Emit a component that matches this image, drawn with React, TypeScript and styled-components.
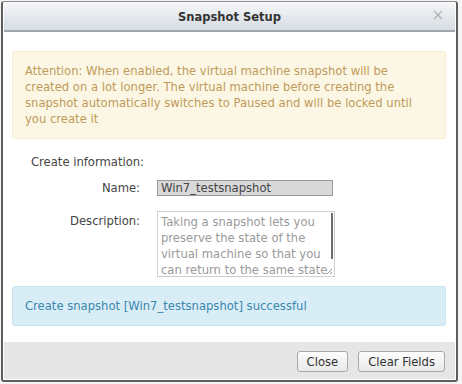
import React from "react";
import styled, { createGlobalStyle } from "styled-components";

const GlobalStyle = createGlobalStyle`
  html, body {
    margin: 0;
    padding: 0;
    background: #f4f4f4;
    font-family: "DejaVu Sans", Verdana, sans-serif;
  }
`;

const Frame = styled.div`
  box-sizing: border-box;
  margin: 1px 0 0 1px;
  width: 457px;
  height: 381px;
  border: 2px solid #5e5e5e;
  border-top: 1px solid #8c8c8c;
  border-radius: 3px;
  padding: 1px;
  background: #fff;
  display: flex;
  flex-direction: column;
`;

const Header = styled.div`
  position: relative;
  height: 27px;
  flex: none;
  display: flex;
  align-items: center;
  justify-content: center;
  background: linear-gradient(#f4f6f8, #d6dce3);
  border-bottom: 2px solid #a0a6ad;
  border-radius: 3px 3px 0 0;
`;

const Title = styled.div`
  font-size: 11.5px;
  font-weight: bold;
  color: #333;
`;

const CloseX = styled.svg`
  position: absolute;
  right: 12px;
  top: 7px;
`;

const Body = styled.div`
  flex: 1;
  padding: 19px 9px 0 8px;
  display: flex;
  flex-direction: column;
  font-size: 11.6px;
  line-height: 16px;
`;

const Alert = styled.div<{ $tone: "warn" | "info" }>`
  box-sizing: border-box;
  border-radius: 3px;
  border: 1px solid ${(p) => (p.$tone === "warn" ? "#f8ecd0" : "#c2e6f2")};
  background: ${(p) => (p.$tone === "warn" ? "#fcf7e4" : "#d9edf7")};
  color: ${(p) => (p.$tone === "warn" ? "#c09a5b" : "#3a87ad")};
  padding: 11px 12px;
  height: ${(p) => (p.$tone === "warn" ? "88px" : "40px")};
`;

const AlertText = styled.div`
  max-width: 392px;
`;

const SectionLabel = styled.div`
  margin: 15px 0 0 19px;
  color: #444;
`;

const Form = styled.div`
  margin-top: 10px;
  display: grid;
  grid-template-columns: 128px 178px;
  column-gap: 17px;
  row-gap: 15px;
  align-items: start;
`;

const Label = styled.div<{ $pad?: number }>`
  text-align: right;
  color: #444;
  padding-top: ${(p) => p.$pad ?? 0}px;
`;

const NameInput = styled.div`
  box-sizing: border-box;
  width: 176px;
  height: 16px;
  background: #d9d9d9;
  border: 1px solid #9a9a9a;
  padding: 0 3px;
  line-height: 14px;
  color: #444;
`;

const TextBox = styled.div`
  position: relative;
  box-sizing: border-box;
  width: 178px;
  height: 66px;
  border: 1px solid #cfcfcf;
  padding: 2px 2px 0 3px;
  color: #9a9a9a;
  overflow: hidden;
`;

const Thumb = styled.div`
  position: absolute;
  right: 1px;
  top: 1px;
  width: 2px;
  height: 46px;
  background: #6e6e6e;
`;

const Grip = styled.svg`
  position: absolute;
  right: 1px;
  bottom: 1px;
`;

const Footer = styled.div`
  height: 37px;
  flex: none;
  background: #e6e6e6;
  display: flex;
  justify-content: flex-end;
  align-items: flex-start;
  gap: 10px;
  padding: 9px 10px 0 0;
  box-sizing: border-box;
`;

const Button = styled.button`
  height: 21px;
  padding: 0 9px;
  border: 1px solid #a9a9a9;
  border-radius: 3px;
  background: linear-gradient(#fdfdfd, #e9e9e9);
  font-family: "DejaVu Sans", Verdana, sans-serif;
  font-size: 11.6px;
  color: #333;
`;

const Spacer = styled.div`
  height: 9px;
`;

export default function App() {
  return (
    <>
      <GlobalStyle />
      <Frame>
        <Header>
          <Title>Snapshot Setup</Title>
          <CloseX width="10" height="10" viewBox="0 0 10 10">
            <path d="M1 1L9 9M9 1L1 9" stroke="#b0b0b0" strokeWidth="1.3" />
          </CloseX>
        </Header>
        <Body>
          <Alert $tone="warn">
            <AlertText>
              Attention: When enabled, the virtual machine snapshot will be
              created on a lot longer. The virtual machine before creating the
              snapshot automatically switches to Paused and will be locked
              until you create it
            </AlertText>
          </Alert>
          <SectionLabel>Create information:</SectionLabel>
          <Form>
            <Label>Name:</Label>
            <NameInput>Win7_testsnapshot</NameInput>
            <Label $pad={2}>Description:</Label>
            <TextBox>
              Taking a snapshot lets you preserve the state of the virtual
              machine so that you can return to the same state
              <Thumb />
              <Grip width="7" height="7" viewBox="0 0 7 7">
                <path d="M6 1L1 6M6 4L4 6" stroke="#999" strokeWidth="1" />
              </Grip>
            </TextBox>
          </Form>
          <Spacer />
          <Alert $tone="info">Create snapshot [Win7_testsnapshot] successful</Alert>
        </Body>
        <Footer>
          <Button>Close</Button>
          <Button>Clear Fields</Button>
        </Footer>
      </Frame>
    </>
  );
}
